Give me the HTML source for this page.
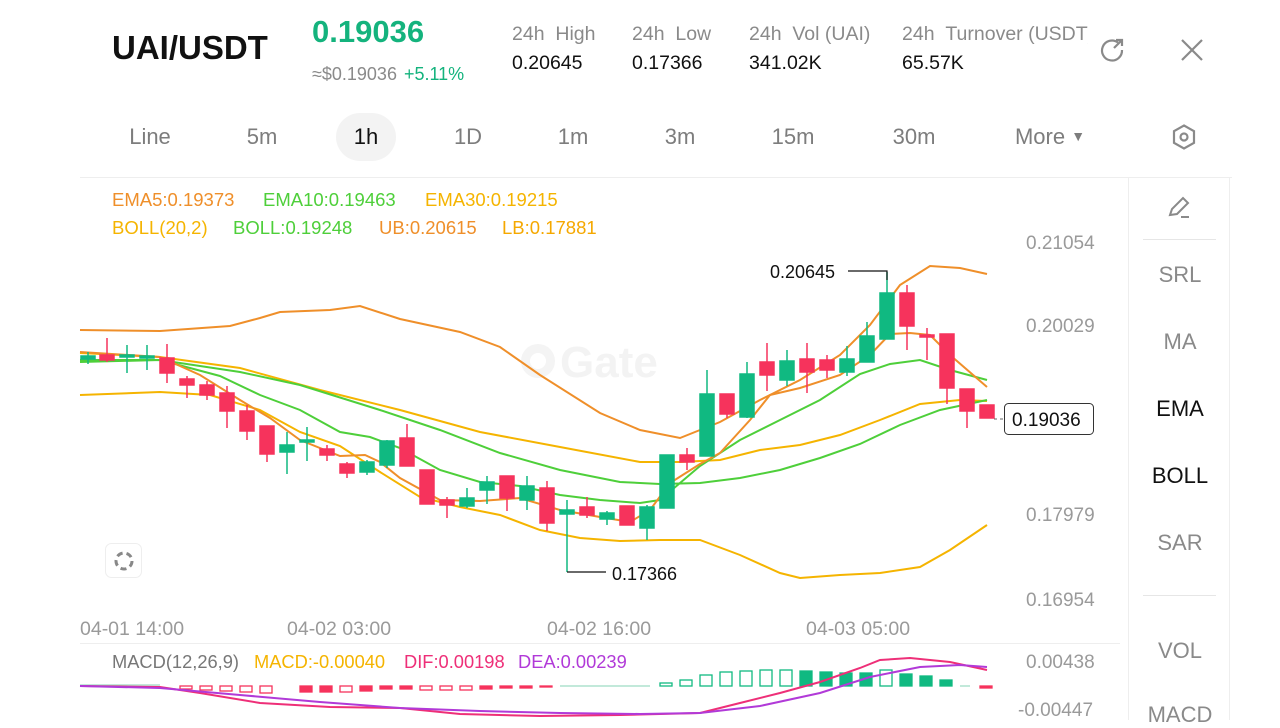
<!DOCTYPE html>
<html><head><meta charset="utf-8"><style>
*{margin:0;padding:0;box-sizing:border-box}
body{width:1280px;height:720px;overflow:hidden;background:#fff;font-family:"Liberation Sans",sans-serif;position:relative}
.a{position:absolute;white-space:nowrap}
.g{color:#8a8a8a}
.tab{position:absolute;top:124px;font-size:22px;color:#7d7d7d;transform:translateX(-50%)}
.side{position:absolute;left:1180px;transform:translateX(-50%);font-size:22px;color:#8a8a8a}
.ax{position:absolute;left:1026px;font-size:19px;color:#9a9a9a}
.tm{position:absolute;top:618px;font-size:19.5px;color:#9a9a9a}
.st{font-size:19.5px}
.lb{font-size:18.5px}
</style></head><body>
<div class="a" style="left:112px;top:29px;font-size:33px;font-weight:bold;color:#111">UAI/USDT</div>
<div class="a" style="left:312px;top:14px;font-size:31px;font-weight:bold;color:#14b37d">0.19036</div>
<div class="a" style="left:312px;top:64px;font-size:18px;color:#8a8a8a">≈$0.19036 <span style="color:#14b37d;margin-left:2px">+5.11%</span></div>
<div class="a g st" style="left:512px;top:23px">24h&nbsp;&nbsp;High</div>
<div class="a st" style="left:512px;top:52px;color:#111">0.20645</div>
<div class="a g st" style="left:632px;top:23px">24h&nbsp;&nbsp;Low</div>
<div class="a st" style="left:632px;top:52px;color:#111">0.17366</div>
<div class="a g st" style="left:749px;top:23px">24h&nbsp;&nbsp;Vol (UAI)</div>
<div class="a st" style="left:749px;top:52px;color:#111">341.02K</div>
<div class="a g st" style="left:902px;top:23px;width:186px;overflow:hidden">24h&nbsp;&nbsp;Turnover (USDT)</div>
<div class="a st" style="left:902px;top:52px;color:#111">65.57K</div>
<svg class="a" style="left:1096px;top:34px" width="32" height="32" viewBox="0 0 32 32" fill="none" stroke="#8a8a8a" stroke-width="2.2"><path d="M22 8.5A10 10 0 1 0 26 16"/><path d="M18 14L26 6M20 6h6v6"/></svg>
<svg class="a" style="left:1178px;top:36px" width="28" height="28" viewBox="0 0 28 28" stroke="#8a8a8a" stroke-width="2.2"><path d="M4 4L24 24M24 4L4 24"/></svg>

<div style="position:absolute;left:336px;top:113px;width:60px;height:48px;border-radius:24px;background:#f3f3f3"></div>
<div class="tab" style="left:150px">Line</div>
<div class="tab" style="left:262px">5m</div>
<div class="tab" style="left:366px;color:#111">1h</div>
<div class="tab" style="left:468px">1D</div>
<div class="tab" style="left:573px">1m</div>
<div class="tab" style="left:680px">3m</div>
<div class="tab" style="left:793px">15m</div>
<div class="tab" style="left:914px">30m</div>
<div class="tab" style="left:1050px">More <span style="font-size:14px;position:relative;top:-3px">▼</span></div>
<svg class="a" style="left:1170px;top:123px" width="28" height="28" viewBox="0 0 28 28" fill="none" stroke="#8a8a8a" stroke-width="2.2"><path d="M14 2.5L24 8.2V19.8L14 25.5L4 19.8V8.2Z"/><circle cx="14" cy="14" r="3.5"/></svg>

<div style="position:absolute;left:80px;top:177px;width:1152px;height:1px;background:#eee"></div>
<div style="position:absolute;left:1128px;top:178px;width:1px;height:542px;background:#eee"></div>
<div style="position:absolute;left:1229px;top:178px;width:1px;height:542px;background:#eee"></div>
<div style="position:absolute;left:80px;top:643px;width:1040px;height:1px;background:#eee"></div>

<svg class="a" style="left:1166px;top:195px" width="28" height="26" viewBox="0 0 28 26" fill="none" stroke="#8a8a8a" stroke-width="2"><path d="M4 20l2-6L17 3l5 5L11 19z"/><path d="M15 22h8"/></svg>
<div style="position:absolute;left:1143px;top:239px;width:73px;height:1px;background:#e6e6e6"></div>
<div class="side" style="top:262px">SRL</div>
<div class="side" style="top:329px">MA</div>
<div class="side" style="top:396px;color:#111">EMA</div>
<div class="side" style="top:463px;color:#111">BOLL</div>
<div class="side" style="top:530px">SAR</div>
<div style="position:absolute;left:1143px;top:595px;width:73px;height:1px;background:#e6e6e6"></div>
<div class="side" style="top:638px">VOL</div>
<div class="side" style="top:702px">MACD</div>

<div class="a lb" style="left:112px;top:189px;color:#ef8f2a">EMA5:0.19373</div>
<div class="a lb" style="left:263px;top:189px;color:#4ecf3a">EMA10:0.19463</div>
<div class="a lb" style="left:425px;top:189px;color:#f5b400">EMA30:0.19215</div>
<div class="a lb" style="left:112px;top:217px;color:#f5b400">BOLL(20,2)</div>
<div class="a lb" style="left:233px;top:217px;color:#4ecf3a">BOLL:0.19248</div>
<div class="a lb" style="left:379px;top:217px;color:#ef8f2a">UB:0.20615</div>
<div class="a lb" style="left:502px;top:217px;color:#f5a800">LB:0.17881</div>

<div class="ax" style="top:233px">0.21054</div>
<div class="ax" style="top:316px">0.20029</div>
<div class="ax" style="top:505px">0.17979</div>
<div class="ax" style="top:590px">0.16954</div>
<div class="tm" style="left:80px">04-01 14:00</div>
<div class="tm" style="left:287px">04-02 03:00</div>
<div class="tm" style="left:547px">04-02 16:00</div>
<div class="tm" style="left:806px">04-03 05:00</div>

<svg class="a" style="left:0;top:0" width="1128" height="720">
<g fill="#f4f4f4"><circle cx="538" cy="361" r="17"/><circle cx="538" cy="361" r="8" fill="#fff"/></g>
<text x="560" y="377" font-size="44" font-weight="bold" fill="#f3f3f3" font-family="Liberation Sans">Gate</text>
<g fill="none" stroke-width="2">
<polyline stroke="#ef8f2a" points="80,330 160,331 230,326 260,318 280,312 330,310 360,306 400,319 460,332 500,347 540,375 600,413 640,430 680,438 720,422 760,400 800,380 840,355 870,325 900,285 930,266 960,268 987,274"/>
<polyline stroke="#f5b400" points="80,395 160,392 210,395 260,410 300,432 340,446 380,472 420,497 460,507 500,515 540,530 580,538 620,541 660,540 700,540 740,555 780,573 800,578 840,575 880,573 920,567 950,550 987,525"/>
<polyline stroke="#f5b400" points="80,353 160,357 240,368 320,390 400,410 480,432 560,447 640,462 680,462 720,460 760,450 800,445 840,435 880,420 920,404 960,400 987,401"/>
<polyline stroke="#4ecf3a" points="80,362 160,360 240,372 300,385 380,410 440,430 500,453 560,470 620,482 660,484 700,483 740,478 780,470 820,458 860,444 900,425 940,410 987,400"/>
<polyline stroke="#4ecf3a" points="80,360 160,360 220,376 260,395 300,410 340,432 370,437 400,448 440,470 480,482 520,486 560,495 600,500 640,503 660,500 680,483 700,466 740,440 780,420 820,400 860,374 890,364 920,360 950,370 987,380"/>
<polyline stroke="#ef8f2a" points="80,352 160,357 200,375 240,400 270,418 300,440 340,456 365,455 380,462 400,478 440,500 480,501 520,498 560,510 600,517 630,522 650,510 670,483 700,464 720,453 750,420 770,395 800,388 840,375 870,355 890,334 910,333 930,335 950,355 987,387"/>
</g>
<g stroke-width="1.5">
<g stroke="#10b981" fill="#10b981">
<line x1="88" y1="352" x2="88" y2="364"/><rect x="81" y="356" width="14" height="3"/>
<line x1="127" y1="345" x2="127" y2="373"/><rect x="120" y="355" width="14" height="2"/>
<line x1="147" y1="345" x2="147" y2="370"/><rect x="140" y="356" width="14" height="2"/>
<line x1="287" y1="432" x2="287" y2="474"/><rect x="280" y="445" width="14" height="7"/>
<line x1="307" y1="427" x2="307" y2="461"/><rect x="300" y="440" width="14" height="2"/>
<line x1="367" y1="460" x2="367" y2="475"/><rect x="360" y="462" width="14" height="10"/>
<line x1="387" y1="440" x2="387" y2="468"/><rect x="380" y="441" width="14" height="24"/>
<line x1="467" y1="488" x2="467" y2="508"/><rect x="460" y="498" width="14" height="8"/>
<line x1="487" y1="476" x2="487" y2="504"/><rect x="480" y="482" width="14" height="8"/>
<line x1="527" y1="476" x2="527" y2="510"/><rect x="520" y="486" width="14" height="14"/>
<line x1="567" y1="500" x2="567" y2="572"/><rect x="560" y="510" width="14" height="4"/>
<line x1="607" y1="511" x2="607" y2="525"/><rect x="600" y="513" width="14" height="6"/>
<line x1="647" y1="505" x2="647" y2="540"/><rect x="640" y="507" width="14" height="21"/>
<line x1="667" y1="455" x2="667" y2="508"/><rect x="660" y="455" width="14" height="53"/>
<line x1="707" y1="370" x2="707" y2="456"/><rect x="700" y="394" width="14" height="62"/>
<line x1="747" y1="362" x2="747" y2="418"/><rect x="740" y="374" width="14" height="43"/>
<line x1="787" y1="350" x2="787" y2="386"/><rect x="780" y="361" width="14" height="19"/>
<line x1="847" y1="346" x2="847" y2="376"/><rect x="840" y="359" width="14" height="13"/>
<line x1="867" y1="322" x2="867" y2="362"/><rect x="860" y="336" width="14" height="26"/>
<line x1="887" y1="272" x2="887" y2="339"/><rect x="880" y="293" width="14" height="46"/>
</g>
<g stroke="#f6335c" fill="#f6335c">
<line x1="107" y1="338" x2="107" y2="362"/><rect x="100" y="355" width="14" height="5"/>
<line x1="167" y1="344" x2="167" y2="383"/><rect x="160" y="358" width="14" height="15"/>
<line x1="187" y1="376" x2="187" y2="398"/><rect x="180" y="379" width="14" height="6"/>
<line x1="207" y1="381" x2="207" y2="400"/><rect x="200" y="385" width="14" height="10"/>
<line x1="227" y1="386" x2="227" y2="428"/><rect x="220" y="393" width="14" height="18"/>
<line x1="247" y1="405" x2="247" y2="440"/><rect x="240" y="411" width="14" height="20"/>
<line x1="267" y1="426" x2="267" y2="462"/><rect x="260" y="426" width="14" height="28"/>
<line x1="327" y1="445" x2="327" y2="461"/><rect x="320" y="449" width="14" height="6"/>
<line x1="347" y1="462" x2="347" y2="478"/><rect x="340" y="464" width="14" height="9"/>
<line x1="407" y1="424" x2="407" y2="466"/><rect x="400" y="438" width="14" height="28"/>
<rect x="420" y="470" width="14" height="34"/>
<line x1="447" y1="497" x2="447" y2="518"/><rect x="440" y="500" width="14" height="5"/>
<line x1="507" y1="476" x2="507" y2="511"/><rect x="500" y="476" width="14" height="22"/>
<line x1="547" y1="481" x2="547" y2="531"/><rect x="540" y="488" width="14" height="35"/>
<line x1="587" y1="497" x2="587" y2="518"/><rect x="580" y="507" width="14" height="8"/>
<rect x="620" y="506" width="14" height="19"/>
<line x1="687" y1="448" x2="687" y2="470"/><rect x="680" y="455" width="14" height="7"/>
<line x1="727" y1="394" x2="727" y2="418"/><rect x="720" y="394" width="14" height="20"/>
<line x1="767" y1="343" x2="767" y2="391"/><rect x="760" y="362" width="14" height="13"/>
<line x1="807" y1="343" x2="807" y2="393"/><rect x="800" y="359" width="14" height="13"/>
<line x1="827" y1="355" x2="827" y2="378"/><rect x="820" y="360" width="14" height="10"/>
<line x1="907" y1="285" x2="907" y2="350"/><rect x="900" y="293" width="14" height="33"/>
<line x1="927" y1="328" x2="927" y2="360"/><rect x="920" y="335" width="14" height="2"/>
<line x1="947" y1="334" x2="947" y2="404"/><rect x="940" y="334" width="14" height="54"/>
<line x1="967" y1="389" x2="967" y2="428"/><rect x="960" y="389" width="14" height="22"/>
<rect x="980" y="405" width="14" height="13"/>
</g>
</g>
<path d="M567 572H606" stroke="#111" stroke-width="1.2"/>
<text x="612" y="580" font-size="18" fill="#111" font-family="Liberation Sans">0.17366</text>
<path d="M848 271H887V280" stroke="#111" stroke-width="1.2" fill="none"/>
<text x="770" y="278" font-size="18" fill="#111" font-family="Liberation Sans">0.20645</text>
<path d="M994 419H1004" stroke="#666" stroke-dasharray="3 3"/>
<rect x="1004.5" y="403.5" width="89" height="31" rx="4" fill="#fff" stroke="#333"/>
<text x="1012" y="426" font-size="19" fill="#111" font-family="Liberation Sans">0.19036</text>
<rect x="105.5" y="543.5" width="36" height="34" rx="6" fill="#fff" stroke="#eee"/>
<circle cx="124" cy="561" r="8" fill="none" stroke="#888" stroke-width="3" stroke-dasharray="6 4"/>
<g font-family="Liberation Sans" font-size="18.3">
<text x="112" y="668" fill="#777">MACD(12,26,9)</text>
<text x="254" y="668" fill="#f5b400">MACD:-0.00040</text>
<text x="404" y="668" fill="#ee2f78">DIF:0.00198</text>
<text x="518" y="668" fill="#b13ad8">DEA:0.00239</text>
<text x="1026" y="668" fill="#9a9a9a" font-size="19">0.00438</text>
<text x="1018" y="716" fill="#9a9a9a" font-size="19">-0.00447</text>
</g>
<g stroke-width="1.3">
<g fill="none" stroke="#f6335c"><rect x="180" y="686" width="12" height="3"/><rect x="200" y="686" width="12" height="4"/><rect x="220" y="686" width="12" height="5"/><rect x="240" y="686" width="12" height="6"/><rect x="260" y="686" width="12" height="7"/><rect x="340" y="686" width="12" height="6"/><rect x="420" y="686" width="12" height="4"/><rect x="440" y="686" width="12" height="4"/><rect x="460" y="686" width="12" height="4"/></g>
<g fill="#f6335c" stroke="#f6335c"><rect x="300" y="686" width="12" height="6"/><rect x="320" y="686" width="12" height="6"/><rect x="360" y="686" width="12" height="5"/><rect x="380" y="686" width="12" height="3"/><rect x="400" y="686" width="12" height="3"/><rect x="480" y="686" width="12" height="3"/><rect x="500" y="686" width="12" height="2"/><rect x="520" y="686" width="12" height="2"/><rect x="540" y="686" width="12" height="1"/><rect x="980" y="686" width="12" height="2"/></g>
<g fill="none" stroke="#10b981"><rect x="660" y="683" width="12" height="3"/><rect x="680" y="680" width="12" height="6"/><rect x="700" y="675" width="12" height="11"/><rect x="720" y="672" width="12" height="14"/><rect x="740" y="671" width="12" height="15"/><rect x="760" y="670" width="12" height="16"/><rect x="780" y="670" width="12" height="16"/><rect x="880" y="670" width="12" height="16"/></g>
<g fill="#10b981" stroke="#10b981"><rect x="800" y="671" width="12" height="15"/><rect x="820" y="672" width="12" height="14"/><rect x="840" y="673" width="12" height="13"/><rect x="860" y="673" width="12" height="13"/><rect x="900" y="674" width="12" height="12"/><rect x="920" y="676" width="12" height="10"/><rect x="940" y="680" width="12" height="6"/></g>
<path d="M80 685H160M560 686H650M960 686H970" stroke="#9ddcc4"/>
</g>
<polyline fill="none" stroke="#ee2f78" stroke-width="2" points="80,686 160,687 200,693 260,703 330,707 400,708 460,714 540,716 620,715 700,713 740,703 780,693 820,682 860,668 880,660 910,658 950,662 987,670"/>
<polyline fill="none" stroke="#b13ad8" stroke-width="2" points="80,686 160,688 240,695 320,702 400,708 480,711 560,713 640,714 700,713 760,706 820,693 870,677 920,667 960,665 987,667"/>
</svg>
</body></html>
